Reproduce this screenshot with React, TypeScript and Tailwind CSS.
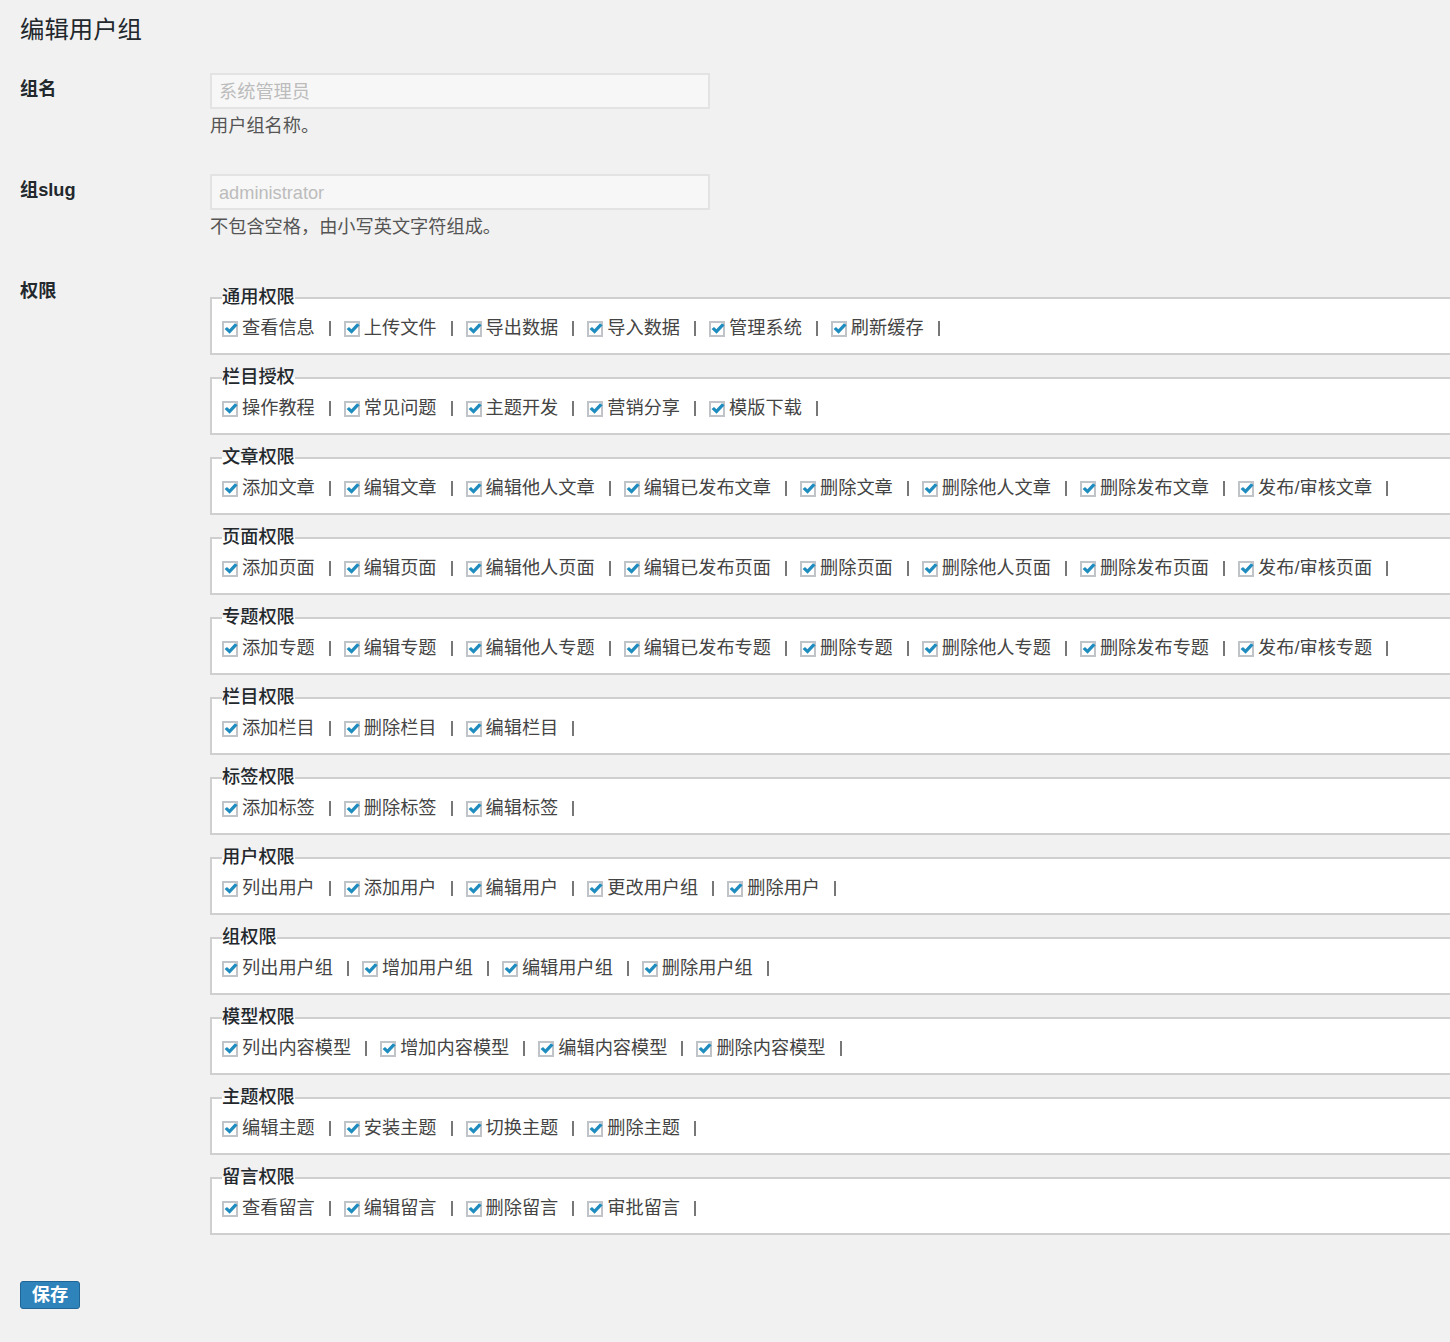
import * as React from "react"

type Group = { title: string; items: string[] }

const groups: Group[] = [
    { title: "通用权限", items: ["查看信息", "上传文件", "导出数据", "导入数据", "管理系统", "刷新缓存"] },
    { title: "栏目授权", items: ["操作教程", "常见问题", "主题开发", "营销分享", "模版下载"] },
    { title: "文章权限", items: ["添加文章", "编辑文章", "编辑他人文章", "编辑已发布文章", "删除文章", "删除他人文章", "删除发布文章", "发布/审核文章"] },
    { title: "页面权限", items: ["添加页面", "编辑页面", "编辑他人页面", "编辑已发布页面", "删除页面", "删除他人页面", "删除发布页面", "发布/审核页面"] },
    { title: "专题权限", items: ["添加专题", "编辑专题", "编辑他人专题", "编辑已发布专题", "删除专题", "删除他人专题", "删除发布专题", "发布/审核专题"] },
    { title: "栏目权限", items: ["添加栏目", "删除栏目", "编辑栏目"] },
    { title: "标签权限", items: ["添加标签", "删除标签", "编辑标签"] },
    { title: "用户权限", items: ["列出用户", "添加用户", "编辑用户", "更改用户组", "删除用户"] },
    { title: "组权限", items: ["列出用户组", "增加用户组", "编辑用户组", "删除用户组"] },
    { title: "模型权限", items: ["列出内容模型", "增加内容模型", "编辑内容模型", "删除内容模型"] },
    { title: "主题权限", items: ["编辑主题", "安装主题", "切换主题", "删除主题"] },
    { title: "留言权限", items: ["查看留言", "编辑留言", "删除留言", "审批留言"] },
]

function CheckBox() {
    return (
        <span className="relative w-[16px] h-[16px] border-2 border-[#c0c4c8] bg-white shrink-0">
            <svg viewBox="0 0 14 12" className="absolute left-[0px] top-[0px] w-[14px] h-[12px]">
                <path d="M0.6 6 L3 3.9 L5.4 6.3 L11 0.2 L13.6 2.2 L5.6 10.8 Z" fill="#1e8cbe" />
            </svg>
        </span>
    )
}

function PermGroup({ group }: { group: Group }) {
    return (
        <fieldset className="border-2 border-r-0 border-[#cfcfcf] bg-white pl-[10px] pt-[6px] pb-[12px] mb-[10px]">
            <legend className="px-0 text-[18.2px] leading-[25px] font-medium text-[#23282d]">{group.title}</legend>
            <div className="flex items-center leading-[25px] text-[18.2px] text-[#444]">
                {group.items.map(it => (
                    <label key={it} className="flex items-center">
                        <CheckBox />
                        <span className="ml-[4px]">{it}</span>
                        <span className="ml-[14px] mr-[13px] w-[2px] h-[15px] bg-[#777]" />
                    </label>
                ))}
            </div>
        </fieldset>
    )
}

export default function App() {
    return (
        <div
            className="min-h-screen bg-[#f1f1f1] pl-[20px] pt-[15px] pb-[33px] text-[#444]"
            style={{ fontFamily: '"Liberation Sans", "Noto Sans CJK SC", sans-serif' }}
        >
            <h1 className="text-[24.4px] leading-[30px] text-[#23282d]">编辑用户组</h1>

            {/* group name */}
            <div className="flex mt-[28px]">
                <div className="w-[190px] pt-[4px] text-[18.2px] leading-[25px] font-semibold text-[#23282d]">组名</div>
                <div>
                    <input
                        disabled
                        placeholder="系统管理员"
                        className="block w-[500px] h-[36px] border-2 border-[#e3e3e3] bg-[#f7f7f7] px-[7px] pt-[2px] text-[18.2px] placeholder:text-[#bcbcbc]"
                    />
                    <p className="mt-[5px] text-[18.2px] leading-[25px] text-[#555]">用户组名称。</p>
                </div>
            </div>

            {/* slug */}
            <div className="flex mt-[35px]">
                <div className="w-[190px] pt-[4px] text-[18.2px] leading-[25px] font-semibold text-[#23282d]">组slug</div>
                <div>
                    <input
                        disabled
                        placeholder="administrator"
                        className="block w-[500px] h-[36px] border-2 border-[#e3e3e3] bg-[#f7f7f7] px-[7px] pt-[2px] text-[18.2px] placeholder:text-[#bcbcbc]"
                    />
                    <p className="mt-[5px] text-[18.2px] leading-[25px] text-[#555]">不包含空格，由小写英文字符组成。</p>
                </div>
            </div>

            {/* permissions */}
            <div className="flex mt-[39px]">
                <div className="w-[190px] shrink-0 text-[18.2px] leading-[25px] font-semibold text-[#23282d]">权限</div>
                <div className="flex-1 pt-[6px]">
                    {groups.map(g => <PermGroup key={g.title} group={g} />)}
                </div>
            </div>

            <button className="mt-[36px] w-[60px] h-[28px] rounded-[3px] border border-[#1f6596] bg-[#2f83bb] text-white text-[18.2px] leading-[26px] font-semibold">
                保存
            </button>
        </div>
    )
}
